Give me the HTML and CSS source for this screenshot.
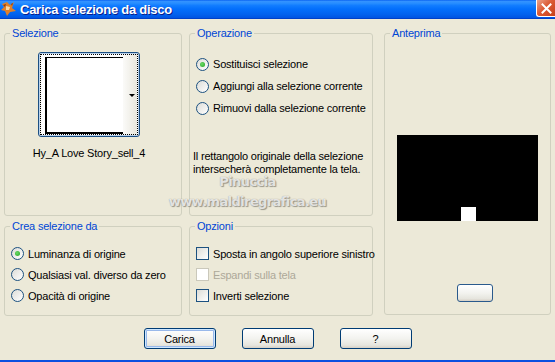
FILE: index.html
```html
<!DOCTYPE html>
<html lang="it">
<head>
    <meta charset="UTF-8">
    <title>Carica selezione da disco</title>
    <link rel="stylesheet" href="styles.css">
</head>
<body>
<div class="window">
    <div class="titlebar">
        <svg class="app-icon" width="16" height="16" viewBox="0 0 16 16">
            <path d="M1 3 L6 1 L9 4 L13 1 L11 7 L15 10 L9 11 L6 15 L4 10 L0 9 L3 6Z" fill="#E0802A"/>
            <path d="M5 5 L9 6 L8 9 L5 9Z" fill="#F8D7A4"/>
            <path d="M2 4 L5 3 L4 6Z" fill="#8A3B12"/>
            <path d="M10 3 L12 2 L11 5Z" fill="#8A3B12"/>
        </svg>
        <span class="title">Carica selezione da disco</span>
        <span class="close">
            <svg width="11" height="11" viewBox="0 0 11 11">
                <path d="M1.5 1.5 L9.5 9.5 M9.5 1.5 L1.5 9.5" stroke="#fff" stroke-width="2" stroke-linecap="square"/>
            </svg>
        </span>
    </div>

    <div class="content">
        <div class="groups">
            <fieldset class="group group-sel">
                <legend>Selezione</legend>
                <div class="thumb">
                    <div class="thumb-focus">
                        <div class="thumb-img"></div>
                        <span class="thumb-arrow"></span>
                    </div>
                </div>
                <div class="thumb-name">Hy_A Love Story_sell_4</div>
            </fieldset>

            <fieldset class="group group-op">
                <legend>Operazione</legend>
                <div class="options wide">
                    <label class="option"><span class="radio checked"></span>Sostituisci selezione</label>
                    <label class="option"><span class="radio"></span>Aggiungi alla selezione corrente</label>
                    <label class="option"><span class="radio"></span>Rimuovi dalla selezione corrente</label>
                </div>
                <p class="note">Il rettangolo originale della selezione<br>intersecherà completamente la tela.</p>
            </fieldset>

            <fieldset class="group group-preview">
                <legend>Anteprima</legend>
                <div class="preview">
                    <div class="preview-sel"></div>
                </div>
                <span class="btn btn-small"></span>
            </fieldset>

            <fieldset class="group group-low">
                <legend>Crea selezione da</legend>
                <div class="options">
                    <label class="option"><span class="radio checked"></span>Luminanza di origine</label>
                    <label class="option"><span class="radio"></span>Qualsiasi val. diverso da zero</label>
                    <label class="option"><span class="radio"></span>Opacità di origine</label>
                </div>
            </fieldset>

            <fieldset class="group group-low">
                <legend>Opzioni</legend>
                <div class="options">
                    <label class="option"><span class="check"></span>Sposta in angolo superiore sinistro</label>
                    <label class="option disabled"><span class="check"></span>Espandi sulla tela</label>
                    <label class="option"><span class="check"></span>Inverti selezione</label>
                </div>
            </fieldset>
        </div>

        <div class="watermark">
            <span>Pinuccia</span>
            <span>www.maldiregrafica.eu</span>
        </div>

        <div class="buttons">
            <span class="btn default">Carica</span>
            <span class="btn">Annulla</span>
            <span class="btn">?</span>
        </div>
    </div>
</div>
</body>
</html>
```

FILE: styles.css
```css
body {
    margin: 0;
    background: #ECE9D8;
    font-family: "Liberation Sans", Arial, sans-serif;
    font-size: 11px;
    letter-spacing: -0.2px;
    color: #000;
}
.window {
    width: 555px;
    height: 362px;
    display: flex;
    flex-direction: column;
    box-sizing: border-box;
    border-bottom: 2px solid #0B50E0;
    overflow: hidden;
}

/* barra del titolo */
.titlebar {
    height: 19px;
    flex: none;
    display: flex;
    align-items: center;
    padding-left: 1px;
    box-sizing: border-box;
    border-bottom: 1px solid #0041C8;
    background: linear-gradient(#0058EE, #3593FF 6%, #288EFF 18%, #127DFF 30%, #036FFC 50%, #0262EE 80%, #0057E5 95%, #0054E3);
}
.app-icon {
    flex: none;
}
.title {
    margin-left: 3px;
    color: #fff;
    font-weight: bold;
    font-size: 13px;
    letter-spacing: -0.25px;
    text-shadow: 1px 1px 0 #0A1E8C;
}
.close {
    margin-left: auto;
    align-self: flex-start;
    width: 19px;
    height: 17px;
    box-sizing: border-box;
    border: 1px solid #fff;
    border-top: none;
    border-right: none;
    border-radius: 0 0 0 3px;
    background: linear-gradient(135deg, #EBA48C, #DC5B35 45%, #C7401B);
    display: flex;
    align-items: center;
    justify-content: center;
}

.content {
    flex: 1;
    position: relative;
    padding: 8px 4px 0;
}
.groups {
    display: grid;
    grid-template-columns: 178px 184px 171px;
    grid-template-rows: 189px 96px;
    gap: 4px 7px;
}
.group {
    margin: 0;
    padding: 0;
    min-width: 0;
    border: 1px solid #D0D0BF;
    border-radius: 3px;
    display: flex;
    flex-direction: column;
}
.group legend {
    margin-left: 5px;
    padding: 0 2px;
    line-height: 13px;
    color: #0046D5;
}

/* Selezione */
.group-sel {
    align-items: center;
    padding-top: 12px;
    padding-right: 8px;
}
.thumb {
    width: 102px;
    height: 85px;
    box-sizing: border-box;
    border: 1px solid #1C4F83;
    border-radius: 3px;
    padding: 1px;
    background: #F4F3EE;
    box-shadow: inset 0 0 0 1px #B9D1EA;
}
.thumb-focus {
    height: 81px;
    box-sizing: border-box;
    border: 1px dotted #000;
    display: flex;
    align-items: center;
    padding: 2px 0 0 4px;
    background: linear-gradient(to right, #fff 82%, #E9E7DD);
}
.thumb-img {
    width: 78px;
    height: 77px;
    align-self: flex-start;
    box-sizing: border-box;
    border-left: 2px solid #000;
    border-top: 1px solid #000;
    border-bottom: 2px solid #000;
    background: #fff;
}
.thumb-arrow {
    margin-left: auto;
    margin-right: 2px;
    width: 0;
    height: 0;
    border-left: 3px solid transparent;
    border-right: 3px solid transparent;
    border-top: 3px solid #000;
}
.thumb-name {
    margin-top: 10px;
    line-height: 13px;
}

/* Opzioni radio / checkbox */
.group-op {
    padding-top: 13px;
}
.options {
    display: flex;
    flex-direction: column;
    padding-left: 6px;
}
.option {
    height: 21px;
    display: flex;
    align-items: center;
    white-space: nowrap;
}
.options.wide .option {
    height: 22px;
}
.radio, .check {
    flex: none;
    width: 13px;
    height: 13px;
    box-sizing: border-box;
    margin-right: 4px;
    border: 1px solid #1C5180;
    background: linear-gradient(135deg, #DCDCD7, #fff);
    display: flex;
    align-items: center;
    justify-content: center;
}
.radio {
    border-radius: 50%;
}
.radio.checked::after {
    content: "";
    width: 5px;
    height: 5px;
    border-radius: 50%;
    background: radial-gradient(circle at 40% 40%, #6BDB67, #21A121);
}
.option.disabled {
    color: #ACA899;
}
.option.disabled .check {
    border-color: #CAC8BB;
    background: #fff;
}
.note {
    margin: 31px 0 0;
    padding-left: 3px;
    line-height: 13px;
    white-space: nowrap;
}
.group-low {
    padding-top: 10px;
}

/* Anteprima */
.group-preview {
    grid-column: 3;
    grid-row: 1 / 3;
    margin-left: 4px;
    margin-bottom: 1px;
    align-items: center;
}
.preview {
    margin-top: 95px;
    width: 141px;
    height: 86px;
    background: #000;
    display: flex;
    align-items: flex-end;
    justify-content: center;
    padding-left: 2px;
    box-sizing: border-box;
}
.preview-sel {
    width: 15px;
    height: 14px;
    background: #fff;
}
.btn-small {
    margin-top: 63px;
    margin-left: 15px;
    width: 36px !important;
    height: 18px !important;
    border-color: #2A5A8C !important;
}

/* pulsanti */
.buttons {
    display: flex;
    justify-content: center;
    gap: 26px;
    margin-top: 12px;
}
.btn {
    width: 72px;
    height: 21px;
    box-sizing: border-box;
    border: 1px solid #003C74;
    border-radius: 3px;
    background: linear-gradient(#FFFFFF, #F3F3EF 50%, #E6E5DE 85%, #D6D0C5);
    display: flex;
    align-items: center;
    justify-content: center;
}
.btn.default {
    box-shadow: inset 0 0 0 1px #CEE7FF, inset 0 0 0 2px #98B8EA;
}

/* filigrana */
.watermark {
    position: absolute;
    left: 160px;
    top: 153px;
    width: 175px;
    display: flex;
    flex-direction: column;
    align-items: center;
    font-family: "DejaVu Sans", sans-serif;
    font-weight: bold;
    font-size: 13px;
    line-height: 20px;
    letter-spacing: -0.6px;
    color: rgba(255, 255, 255, 0.75);
    text-shadow: 0 0 1px #8C8A80, 1px 1px 1px #9A988C;
}
```
